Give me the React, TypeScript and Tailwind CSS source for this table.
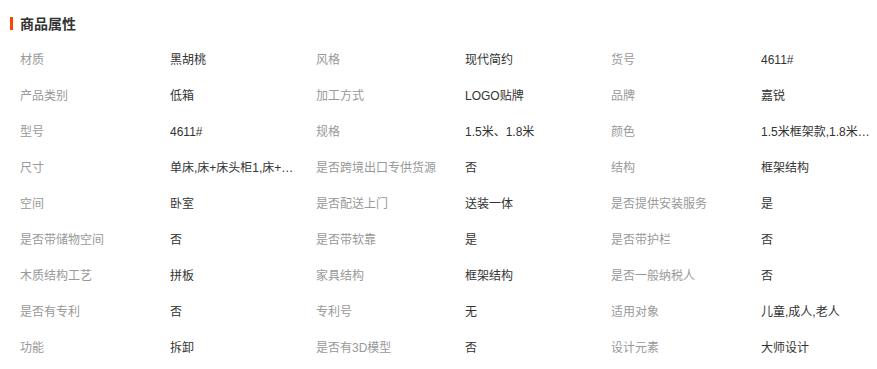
import React from 'react'

type Attr = [string, string]

const rows: Attr[][] = [
    [['材质', '黑胡桃'], ['风格', '现代简约'], ['货号', '4611#']],
    [['产品类别', '低箱'], ['加工方式', 'LOGO贴牌'], ['品牌', '嘉锐']],
    [['型号', '4611#'], ['规格', '1.5米、1.8米'], ['颜色', '1.5米框架款,1.8米框架款']],
    [['尺寸', '单床,床+床头柜1,床+床头柜2'], ['是否跨境出口专供货源', '否'], ['结构', '框架结构']],
    [['空间', '卧室'], ['是否配送上门', '送装一体'], ['是否提供安装服务', '是']],
    [['是否带储物空间', '否'], ['是否带软靠', '是'], ['是否带护栏', '否']],
    [['木质结构工艺', '拼板'], ['家具结构', '框架结构'], ['是否一般纳税人', '否']],
    [['是否有专利', '否'], ['专利号', '无'], ['适用对象', '儿童,成人,老人']],
    [['功能', '拆卸'], ['是否有3D模型', '否'], ['设计元素', '大师设计']],
]

const App: React.FC = () => {
    return (
        <div
            className="h-[369px] w-[877px] overflow-hidden bg-white"
            style={{ fontFamily: '"Liberation Sans", "Noto Sans CJK SC", sans-serif' }}
        >
            {/* title */}
            <div className="flex h-[42px] items-center pl-[10px] pt-[5px]">
                <span className="h-[13px] w-[3px] bg-[#ff4400]" />
                <h3 className="ml-[7px] text-[14px] font-bold leading-none text-[#333]">商品属性</h3>
            </div>

            <div className="pl-[20px] text-[12px] leading-[36px]">
                {rows.map((row, i) => (
                    <div key={i} className="flex h-[36px]">
                        {row.map(([label, value], j) => (
                            <React.Fragment key={label}>
                                <div className={j === 1 ? 'w-[149px] shrink-0 text-[#999]' : 'w-[150px] shrink-0 text-[#999]'}>
                                    {label}
                                </div>
                                <div
                                    className={
                                        j === 2
                                            ? 'min-w-0 flex-1 truncate text-[#333]'
                                            : 'w-[146px] shrink-0 truncate pr-[16px] text-[#333]'
                                    }
                                >
                                    {value}
                                </div>
                            </React.Fragment>
                        ))}
                    </div>
                ))}
            </div>
        </div>
    )
}

export default App
